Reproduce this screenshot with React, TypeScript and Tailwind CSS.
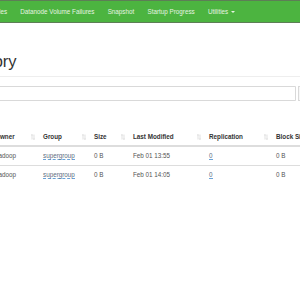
import { ReactNode } from 'react'

const navItems = ['Datanodes', 'Datanode Volume Failures', 'Snapshot', 'Startup Progress']

const columns = [
  { label: 'Permission', w: 'w-[100px]' },
  { label: 'Owner', w: 'w-[48px]' },
  { label: 'Group', w: 'w-[51px]' },
  { label: 'Size', w: 'w-[39px]' },
  { label: 'Last Modified', w: 'w-[76px]' },
  { label: 'Replication', w: 'w-[67px]' },
  { label: 'Block Size', w: 'w-[60px]' },
]

const rows = [
  { perm: '-rw-r--r--', owner: 'hadoop', group: 'supergroup', size: '0 B', modified: 'Feb 01 13:55', repl: '0', block: '0 B' },
  { perm: '-rw-r--r--', owner: 'hadoop', group: 'supergroup', size: '0 B', modified: 'Feb 01 14:05', repl: '0', block: '0 B' },
]

function SortIcon() {
  return (
    <svg width="4" height="6" viewBox="0 0 8 12" className="shrink-0">
      <path d="M2 11V1M0.5 3L2 1l1.5 2M6 1v10M4.5 9L6 11l1.5-2" stroke="#cfcfcf" strokeWidth="1.2" fill="none" />
    </svg>
  )
}

function Editable({ children }: { children: ReactNode }) {
  return <span className="text-[#5d6e82] border-b border-dashed border-[#6aa3d8] leading-[7px]">{children}</span>
}

export default function App() {
  return (
    <div className="w-[300px] h-[300px] overflow-hidden bg-white" style={{ fontFamily: '"Liberation Sans", Arial, sans-serif' }}>
      <nav className="h-[23px] bg-[#4cb440] border-t border-b border-[#5d7e56] flex items-center">
        <div className="flex items-center ml-[-30px] text-[6.3px] text-[#e6f3e2] whitespace-nowrap">
          {navItems.map((n) => (
            <span key={n} className="px-[6.6px]">{n}</span>
          ))}
          <span className="px-[6.6px] flex items-center gap-[3px]">
            Utilities
            <span className="w-0 h-0 border-l-[2px] border-r-[2px] border-t-[2px] border-l-transparent border-r-transparent border-t-[#e6f3e2]" />
          </span>
        </div>
      </nav>

      <div className="ml-[-109px] w-[520px]">
        <div className="mt-[29px] pb-[6px] border-b border-[#eeeeee]">
          <h1 className="text-[16.5px] leading-[18px] text-[#333333] whitespace-nowrap">Browse Directory</h1>
        </div>

        <div className="mt-[9px] flex">
          <div className="w-[405px] h-[15px] border border-[#d9d9d9] rounded-l-[2px] bg-white" />
          <div className="w-[40px] h-[15px] border border-[#d9d9d9] ml-[2px] bg-[#f7f7f7]" />
        </div>

        <table className="mt-[28px] border-collapse text-[6.3px] text-[#555555] table-fixed">
          <thead>
            <tr className="h-[17px] border-b-2 border-[#dddddd]">
              {columns.map((c) => (
                <th key={c.label} className={`${c.w} pl-[4px] pr-[4px] text-left font-bold text-[#333333]`}>
                  <div className="flex items-center justify-between whitespace-nowrap">
                    <span>{c.label}</span>
                    <SortIcon />
                  </div>
                </th>
              ))}
            </tr>
          </thead>
          <tbody>
            {rows.map((r, i) => (
              <tr key={i} className={`h-[19px] ${i === 0 ? 'border-b border-[#dddddd]' : ''}`}>
                <td className="pl-[4px] whitespace-nowrap">{r.perm}</td>
                <td className="pl-[4px] whitespace-nowrap">{r.owner}</td>
                <td className="pl-[4px] whitespace-nowrap"><Editable>{r.group}</Editable></td>
                <td className="pl-[4px] whitespace-nowrap">{r.size}</td>
                <td className="pl-[4px] whitespace-nowrap">{r.modified}</td>
                <td className="pl-[4px] whitespace-nowrap"><Editable>{r.repl}</Editable></td>
                <td className="pl-[4px] whitespace-nowrap">{r.block}</td>
              </tr>
            ))}
          </tbody>
        </table>
      </div>
    </div>
  )
}
